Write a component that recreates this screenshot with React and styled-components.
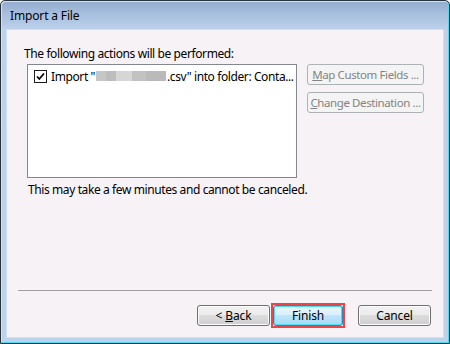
import React from "react";
import styled, { createGlobalStyle } from "styled-components";

const GlobalStyle = createGlobalStyle`
  html, body {
    margin: 0;
    padding: 0;
    background: #ffffff;
  }
  body {
    font-family: "Noto Sans", "Open Sans", sans-serif;
    font-size: 12px;
    letter-spacing: -0.4px;
    color: #000;
  }
`;

const App = () => {
  return (
    <>
      <GlobalStyle />
      <Window>
        <TitleBar>Import a File</TitleBar>
        <Panel>
          <Heading>The following actions will be performed:</Heading>
          <MainRow>
            <ListBox>
              <ListItem>
                <CheckBox />
                <ItemText>
                  Import "
                  <Blur />
                  .csv" into folder: Conta...
                </ItemText>
              </ListItem>
            </ListBox>
            <SideButtons>
              <SideButton disabled>
                <u>M</u>ap Custom Fields ...
              </SideButton>
              <SideButton disabled>
                <u>C</u>hange Destination ...
              </SideButton>
            </SideButtons>
          </MainRow>
          <Note>This may take a few minutes and cannot be canceled.</Note>
          <Separator />
          <ButtonRow>
            <Button>
              &lt; <u>B</u>ack
            </Button>
            <Highlight>
              <Button primary>Finish</Button>
            </Highlight>
            <Button>Cancel</Button>
          </ButtonRow>
        </Panel>
      </Window>
    </>
  );
};

const CheckBox = () => (
  <CheckSvg width="13" height="13" viewBox="0 0 13 13">
    <rect x="0.5" y="0.5" width="12" height="12" fill="#fff" stroke="#1c1c1c" />
    <path d="M3 6.5 L5.3 9 L10 3.5" fill="none" stroke="#000" strokeWidth="1.8" />
  </CheckSvg>
);

export default App;

const Window = styled.div`
  width: 450px;
  height: 344px;
  box-sizing: border-box;
  display: flex;
  flex-direction: column;
  border: 1px solid #26323c;
  border-radius: 5px 5px 0 0;
  box-shadow: inset -1px -1px 0 #4fd8f0, inset 1px 1px 0 #d6e2f0;
  background: linear-gradient(
    to bottom,
    #93adcf 0px,
    #a9c0de 14px,
    #bcd2ec 29px,
    #bcd3ee 100%
  );
  padding: 0 6px 6px 6px;
`;

const TitleBar = styled.div`
  height: 29px;
  display: flex;
  align-items: center;
  padding-left: 3px;
  font-size: 12px;
  letter-spacing: -0.15px;
  color: #000;
`;

const Panel = styled.div`
  flex: 1;
  display: flex;
  flex-direction: column;
  background: #f6f2f6;
  padding: 16px 11px 9px 11px;
  box-shadow: 0 0 0 1px #d3dfee;
`;

const Heading = styled.div`
  padding-left: 6px;
  line-height: 16px;
  margin-bottom: 2px;
`;

const MainRow = styled.div`
  display: flex;
  align-items: flex-start;
  padding-left: 9px;
  gap: 10px;
`;

const ListBox = styled.div`
  width: 270px;
  height: 114px;
  box-sizing: border-box;
  border: 1px solid #828790;
  background: #fff;
  padding: 3px 0 0 6px;
  overflow: hidden;
`;

const ListItem = styled.div`
  display: flex;
  align-items: center;
  gap: 4px;
  height: 16px;
`;

const CheckSvg = styled.svg`
  flex: none;
  display: block;
`;

const ItemText = styled.span`
  display: flex;
  align-items: center;
  white-space: nowrap;
`;

const Blur = styled.span`
  display: inline-block;
  width: 70px;
  height: 10px;
  margin: 0 1px;
  background: linear-gradient(
    to right,
    #c6c6c6 0 14%,
    #bdbdbd 14% 28%,
    #d6d6d6 28% 52%,
    #c2c2c2 52% 72%,
    #bababa 72% 100%
  );
`;

const SideButtons = styled.div`
  display: flex;
  flex-direction: column;
  gap: 7px;
`;

const SideButton = styled.button`
  width: 117px;
  height: 21px;
  box-sizing: border-box;
  border: 1px solid #adb2b5;
  border-radius: 3px;
  background: #f4f4f4;
  color: #838383;
  font-family: inherit;
  font-size: 11.5px;
  letter-spacing: -0.4px;
  padding: 0;
  white-space: nowrap;
  text-align: center;
`;

const Note = styled.div`
  padding-left: 10px;
  margin-top: 4px;
  line-height: 16px;
`;

const Separator = styled.div`
  margin-top: auto;
  height: 1px;
  background: #a0a0a0;
  margin-bottom: 12px;
`;

const ButtonRow = styled.div`
  display: flex;
  justify-content: flex-end;
  align-items: center;
  padding-right: 1px;
`;

const Highlight = styled.div`
  border: 2px solid #e8474a;
  margin: 0 13px 0 1px;
  display: flex;
`;

const Button = styled.button`
  width: ${(p) => (p.primary ? "70px" : "73px")};
  height: 21px;
  box-sizing: border-box;
  border: 1px solid ${(p) => (p.primary ? "#3c7fb1" : "#707070")};
  border-radius: 3px;
  font-family: inherit;
  font-size: 12px;
  letter-spacing: -0.15px;
  color: #000;
  padding: 0;
  background: ${(p) =>
    p.primary
      ? "linear-gradient(to bottom, #eaf6fd 0%, #d9f0fc 50%, #bee6fd 50%, #a7d9f5 100%)"
      : "linear-gradient(to bottom, #f2f2f2 0%, #ebebeb 50%, #dddddd 50%, #cfcfcf 100%)"};
  box-shadow: ${(p) =>
    p.primary ? "inset 0 0 0 1px #48e0f8" : "inset 0 0 0 1px #fcfcfc"};
`;
